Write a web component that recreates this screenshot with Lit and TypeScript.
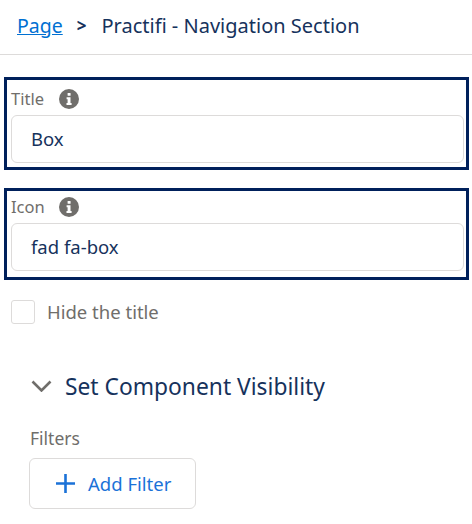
import { LitElement, html, css } from "lit";
import { customElement } from "lit/decorators.js";

const info = html`<svg class="info" viewBox="0 0 20 20" aria-hidden="true"><circle cx="10" cy="10" r="10" fill="#706e6b"/><rect x="8.600" y="4" width="3" height="2.800" rx=".6" fill="#fff"/><path d="M7.600 8.200h3.900v5.700h1.100v2H7.500v-2h1.100v-3.700h-1z" fill="#fff"/></svg>`;

@customElement("app-root")
export class AppRoot extends LitElement {
  static styles = css`
    :host { display: block; width: 472px; height: 524px; background: #fff; overflow: hidden; font-family: "Noto Sans", "Open Sans", sans-serif; color: #16325c; }
    .crumbs { display: flex; align-items: center; padding: 0 0 4px 17px; box-sizing: content-box; height: 50px; border-bottom: 1px solid #dddbda; font-size: 20px; }
    .crumbs a { color: #0070d2; text-decoration: underline; font-size: 19.500px; }
    .sep { font-weight: 700; font-size: 17px; margin: 0 15px 0 14px; }
    .box { margin: 22px 3px 0 4px; border: 3px solid #00205b; padding: 5px 2px 4px 4px; height: 93px; box-sizing: border-box; display: flex; flex-direction: column; }
    .box + .box { margin-top: 18px; height: 92px; padding-top: 2px; }
    .label { display: flex; align-items: center; gap: 15px; height: 27px; padding-bottom: 3px; font-size: 16.500px; color: #706e6b; flex: none; }
    .label span { width: 33px; }
    .info { width: 20px; height: 20px; }
    .input { height: 48px; flex: none; box-sizing: border-box; border: 1px solid #dddbda; border-radius: 6px; padding: 0 0 2px 19px; display: flex; align-items: center; font-size: 18.500px; background: #fff; }
    .check { display: flex; align-items: center; gap: 12px; margin: 20px 0 0 11px; height: 24px; color: #706e6b; font-size: 18.500px; }
    .check span:last-child { margin-top: -2px; }
    .cb { width: 24px; height: 24px; box-sizing: border-box; border: 1px solid #dddbda; border-radius: 3px; }
    .section { display: flex; align-items: center; gap: 13px; margin: 45px 0 0 31px; height: 34px; font-size: 22.800px; }
    .chev { width: 21px; height: 12px; }
    .filters { margin: 23px 0 0 30px; font-size: 17.500px; color: #706e6b; line-height: 24px; height: 24px; }
    .btn { margin: 8px 0 0 29px; width: 167px; height: 51px; box-sizing: border-box; border: 1px solid #dddbda; border-radius: 6px; display: flex; align-items: center; padding-left: 26px; gap: 13px; color: #1b72d8; font-size: 18.500px; }
    .plus { width: 19px; height: 19px; }
  `;
  render() {
    return html`
      <div class="crumbs"><a>Page</a><span class="sep">&gt;</span><span>Practifi - Navigation Section</span></div>
      <div class="box"><div class="label"><span>Title</span>${info}</div><div class="input">Box</div></div>
      <div class="box"><div class="label"><span>Icon</span>${info}</div><div class="input">fad fa-box</div></div>
      <div class="check"><span class="cb"></span><span>Hide the title</span></div>
      <div class="section"><svg class="chev" viewBox="0 0 21 12"><path d="M1.500 1.500l9 9 9-9" fill="none" stroke="#706e6b" stroke-width="2.600"/></svg><span>Set Component Visibility</span></div>
      <div class="filters">Filters</div>
      <div class="btn"><svg class="plus" viewBox="0 0 19 19"><path d="M9.500 0v19M0 9.500h19" stroke="#1b72d8" stroke-width="2.600"/></svg><span>Add Filter</span></div>
    `;
  }
}
